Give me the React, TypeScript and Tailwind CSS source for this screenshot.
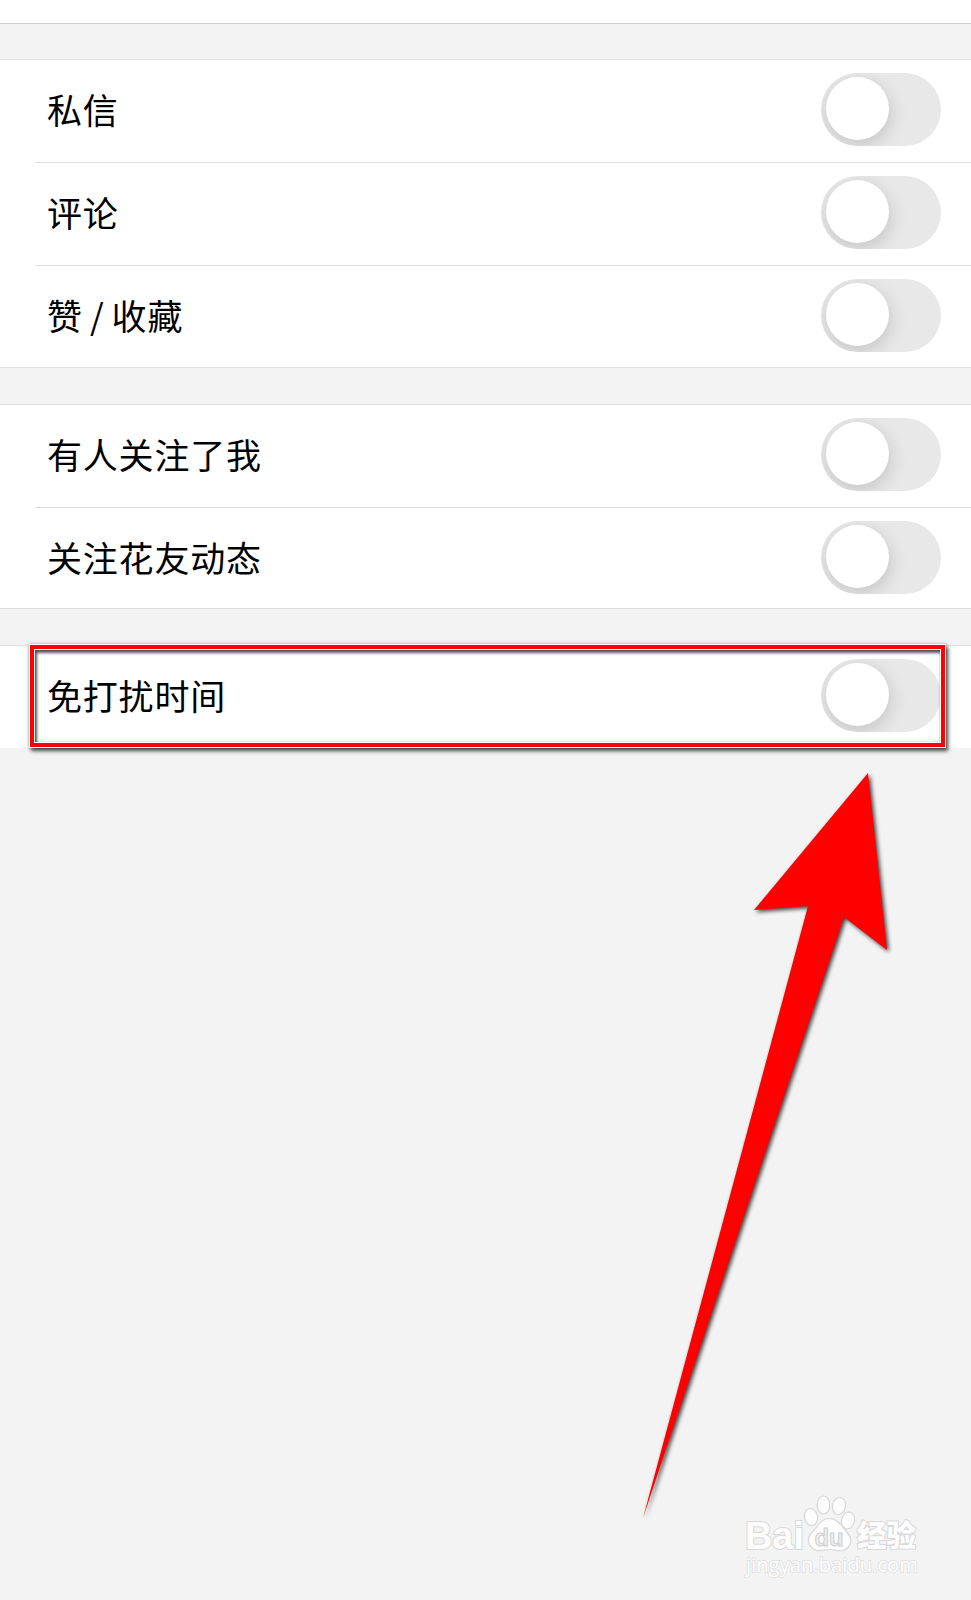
import * as React from "react"
import { clsx } from "clsx"

interface SettingRowProps {
  label: string
  className?: string
}

const groups = [
  [
    { label: "私信", className: "h-[103px] border-b" },
    { label: "评论", className: "h-[103px] border-b" },
    { label: "赞 / 收藏", className: "h-[101px]" },
  ],
  [
    { label: "有人关注了我", className: "h-[103px] border-b" },
    { label: "关注花友动态", className: "h-[100px]" },
  ],
]

function Toggle() {
  return (
    <button
      type="button"
      role="switch"
      aria-checked="false"
      className="mt-[13px] flex h-[73px] w-[120px] shrink-0 items-start overflow-hidden rounded-full bg-[#e8e8e9] pt-1 pl-[5px]"
    >
      <span className="block size-[63px] rounded-full bg-white shadow-[1px_5px_18px_rgba(0,0,0,0.16)]" />
    </button>
  )
}

function SettingRow({ label, className }: SettingRowProps) {
  return (
    <div
      className={clsx(
        "ml-[35px] flex items-start justify-between border-[#dcdcdc] pr-[30px] pl-3",
        className
      )}
    >
      <span className="mt-[31px] text-[35px] leading-[35px] tracking-[0.8px] text-black [word-spacing:-1.5px]">
        {label}
      </span>
      <Toggle />
    </div>
  )
}

function Highlight() {
  return (
    <div className="absolute -top-[2px] left-[29px] h-[104px] w-[917px] border border-white/80 shadow-[2px_3px_4px_rgba(0,0,0,0.7),0_0_3px_rgba(0,0,0,0.3)]">
      <div className="h-full w-full border-4 border-[#ff0000]">
        <div className="h-full w-full border border-white shadow-[inset_2px_3px_3px_rgba(0,0,0,0.65),inset_0_0_2px_rgba(0,0,0,0.4)]" />
      </div>
    </div>
  )
}

function Arrow() {
  return (
    <svg
      className="absolute top-[760px] left-[630px] drop-shadow-[2px_2px_2px_rgba(0,0,0,0.75)]"
      width="280"
      height="770"
      viewBox="630 760 280 770"
    >
      <path d="M868 773L754 910L808 906L643 1518L844 917L887 950Z" fill="#ff0000" />
    </svg>
  )
}

function Watermark() {
  return (
    <svg
      className="absolute top-[1480px] left-[720px]"
      width="220"
      height="110"
      viewBox="0 0 220 110"
      fill="#fdfdfd"
      stroke="#d8d8d8"
      strokeWidth="1.2"
    >
      <g paintOrder="stroke" strokeWidth="2">
        <text x="25" y="69" fontSize="39" fontWeight="700" textLength="59" lengthAdjust="spacingAndGlyphs" fontFamily="Liberation Sans, sans-serif">
          Bai
        </text>
        <text x="137" y="66" fontSize="29.5" fontWeight="900" textLength="59" fontFamily="Noto Sans CJK SC, sans-serif">
          经验
        </text>
        <text x="26" y="92" fontSize="20" strokeWidth="1.5" stroke="#dedede" textLength="172" lengthAdjust="spacingAndGlyphs" fontFamily="Open Sans, sans-serif">
          jingyan.baidu.com
        </text>
      </g>
      <ellipse cx="91" cy="37" rx="6.5" ry="8.7" transform="rotate(-12 91 37)" />
      <ellipse cx="103.5" cy="25" rx="6.3" ry="9" />
      <ellipse cx="119" cy="26" rx="6.5" ry="8.7" transform="rotate(12 119 26)" />
      <ellipse cx="128" cy="40.5" rx="6.5" ry="8.5" transform="rotate(12 128 40.5)" />
      <path d="M109.5 38.500C101 38.500 98.500 46 93.500 50.500C88 55.500 86.500 62 91 67C97 73.500 103 69.500 109.500 69.500C116 69.500 122 73.500 128 67.500C132 63 131.500 57 126 51C121 45.500 118 38.500 109.500 38.500Z" />
      <text x="94.5" y="65.5" fontSize="23" fontWeight="700" fill="#ededed" stroke="#cfcfcf" strokeWidth="1" textLength="29" lengthAdjust="spacingAndGlyphs" fontFamily="Liberation Sans, sans-serif">
        du
      </text>
    </svg>
  )
}

export default function App() {
  return (
    <main className="relative h-[1600px] w-[971px] overflow-hidden bg-[#f3f3f3] font-['Noto_Sans_CJK_SC',sans-serif]">
      {/* Bottom edge of the header */}
      <div className="h-6 border-b border-[#cbcbcb] bg-white" />

      {/* Notification groups */}
      <div className="flex flex-col gap-9 pt-[35px]">
        {groups.map((rows, index) => (
          <section key={index} className="border-y border-[#dfdfdf] bg-white">
            {rows.map((row) => (
              <SettingRow key={row.label} label={row.label} className={row.className} />
            ))}
          </section>
        ))}

        {/* Do not disturb */}
        <section className="relative border-t border-[#dfdfdf] bg-white">
          <SettingRow label="免打扰时间" className="h-[102px]" />
          <Highlight />
        </section>
      </div>

      <Arrow />
      <Watermark />
    </main>
  )
}
